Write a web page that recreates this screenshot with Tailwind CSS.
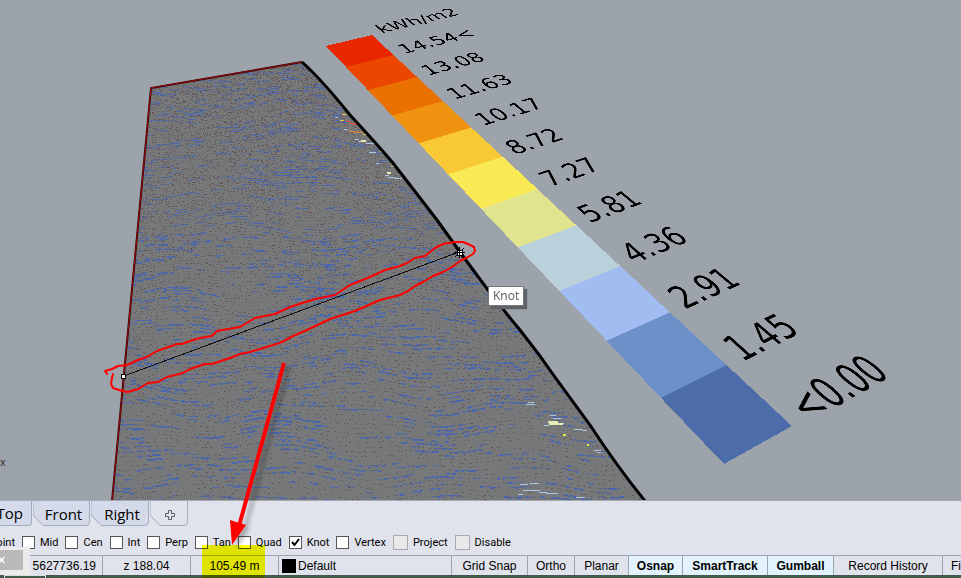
<!DOCTYPE html>
<html lang="en">
<head>
<meta charset="utf-8">
<title>Perspective viewport</title>
<script src="https://cdn.jsdelivr.net/npm/@tailwindcss/browser@4"></script>
</head>
<body class="relative flex h-screen flex-col overflow-hidden bg-[#e0e3eb] font-['Liberation_Sans',sans-serif] text-black">

<main class="relative min-h-0 flex-1 overflow-hidden border-b border-[#a3a8b3] bg-[#9da3ab]">
  <svg class="absolute left-0 top-0" width="961" height="578" viewBox="0 0 961 578" fill="none" aria-label="Radiation mesh">
    <defs>
      <clipPath id="mesh"><path d="M151 88L302 62L322 81L350 115L393 163L437 220L460 252L520 330L557 380L590 425L643 499L644 501H112Z"/></clipPath>
    </defs>
    <path d="M151 88L302 62L322 81L350 115L393 163L437 220L460 252L520 330L557 380L590 425L643 499L644 501H112Z" fill="#77787a"/>
    <g clip-path="url(#mesh)" shape-rendering="crispEdges">
      <path id="dots" stroke="#645658"/>
      <path id="haze" stroke="#5c6688"/>
      <path id="streaks" stroke="#4966b0"/>
      <g stroke-width="1">
        <path stroke="#f4c840" d="M342 114h4M348 113h3M340 120h4M363 134h5M391 166h3M380 151h4"/>
        <path stroke="#e8492c" d="M346 121h4M349 123h6M354 124h5"/>
        <path stroke="#e88a30" d="M349 131h6M354 132h9"/>
        <path stroke="#a9c8e8" d="M335 117h3M344 129h4M355 139h4M358 141h8M366 143h9M369 152h7M376 163h3M385 175h4M388 177h7M394 178h8M526 404h9M528 402h6M550 415h6M553 418h8M556 423h8M544 425h5M574 429h8M582 430h5M594 450h7M597 452h4M520 484h8M530 483h9M523 490h17M539 492h8M546 493h12M576 497h9M518 494h5"/>
        <path stroke="#e6ecb4" stroke-width="2" d="M548 422h10M549 424h14M387 173h4M361 141h5"/>
        <path stroke="#e6e04c" stroke-width="2" d="M563 435h3M587 445h2"/>
      </g>
    </g>
    <path d="M112 501L151 88L302 62" stroke="#2a0a0c" stroke-width="2"/>
    <path d="M112 501L151 88L302 62" stroke="#9a0508" stroke-width="1"/>
    <path d="M302 62Q322 80 350 115Q376 143 393 163L437 220L460 252Q490 294 520 330Q540 355 557 380L590 425Q616 465 645 501" stroke="#000" stroke-width="3"/>
    <path d="M124 376L459 252" stroke="#111" stroke-width="1" shape-rendering="crispEdges"/>
    <path d="M459 247v11M454 252h11M455 248l9 9M464 248l-9 9" stroke="#000" stroke-width="1" shape-rendering="crispEdges"/>
    <path d="M457 250h5v5h-5z" fill="#fff" stroke="#000" stroke-width="1" shape-rendering="crispEdges"/>
    <path d="M459 250v5M457 252h5" stroke="#000" stroke-width="1" shape-rendering="crispEdges"/>
    <rect x="121.500" y="374.500" width="4" height="4" fill="#fff" stroke="#000"/>
  </svg>

  <ol class="absolute left-0 top-0 w-[200px] origin-top-left text-[89px] leading-[84px] font-['DejaVu_Sans',sans-serif] [transform:matrix3d(0.273715,-0.050885,0,0.00011752,0.032323,0.110483,0,-0.00025823,0,0,1,0,326,46,0,1)]">
    <li class="relative h-[165px] bg-[#ea2600]"><span class="absolute -top-[69px] left-[240px] whitespace-nowrap">kWh/m2</span><span class="absolute -bottom-[20px] left-[240px] whitespace-nowrap">14.54&lt;</span></li>
    <li class="relative h-[165px] bg-[#ec4700]"><span class="absolute -bottom-[20px] left-[240px]">13.08</span></li>
    <li class="relative h-[165px] bg-[#ea7000]"><span class="absolute -bottom-[20px] left-[240px]">11.63</span></li>
    <li class="relative h-[165px] bg-[#ef9210]"><span class="absolute -bottom-[20px] left-[240px]">10.17</span></li>
    <li class="relative h-[165px] bg-[#f8c835]"><span class="absolute -bottom-[20px] left-[240px]">8.72</span></li>
    <li class="relative h-[165px] bg-[#f9ea55]"><span class="absolute -bottom-[20px] left-[240px]">7.27</span></li>
    <li class="relative h-[165px] bg-[#e0e48f]"><span class="absolute -bottom-[20px] left-[240px]">5.81</span></li>
    <li class="relative h-[165px] bg-[#bad0da]"><span class="absolute -bottom-[20px] left-[240px]">4.36</span></li>
    <li class="relative h-[165px] bg-[#a0bcf0]"><span class="absolute -bottom-[20px] left-[240px]">2.91</span></li>
    <li class="relative h-[165px] bg-[#6e90c8]"><span class="absolute -bottom-[20px] left-[240px]">1.45</span></li>
    <li class="relative h-[165px] bg-[#4c6caa]"><span class="absolute -bottom-[20px] left-[240px] whitespace-nowrap">&lt;0.00</span></li>
  </ol>

  <div role="tooltip" class="absolute left-[488px] top-[286px] border border-[#767676] bg-white px-1 text-[12px] leading-[18px] text-[#575757] shadow-[3px_3px_1px_#5f6368] font-['Open_Sans',sans-serif]">Knot</div>
  <span class="absolute left-0 top-[455px] text-[11px] leading-[14px] text-[#333]">x</span>
</main>

<nav class="flex h-[28px] shrink-0 items-start gap-px text-[15px] font-['Open_Sans',sans-serif]" aria-label="Viewports">
  <button class="h-[25px] w-[32px] rounded-br-[4px] border-r border-b border-[#a3abc0] bg-[#d4daea] leading-[24px]"><span class="flex justify-end pr-2">Top</span></button>
  <button class="relative h-[25px] w-[57px] pl-1 leading-[24px]"><svg class="absolute left-0 top-0" width="57" height="25" fill="#d4daea" stroke="#a3abc0"><path d="M0 -1V14L10 24.500H53Q56.500 24.500 56.500 21V-1"/></svg><span class="relative">Front</span></button>
  <button class="relative h-[25px] w-[58px] pl-1 leading-[24px]"><svg class="absolute left-0 top-0" width="58" height="25" fill="#d4daea" stroke="#a3abc0"><path d="M0 -1V14L10 24.500H54Q57.500 24.500 57.500 21V-1"/></svg><span class="relative">Right</span></button>
  <button class="relative h-[25px] w-[38px]" aria-label="New viewport"><svg width="38" height="25" fill="none" stroke="#a3abc0"><path d="M0 -1V14L10 24.500H34Q37.500 24.500 37.500 21V-1"/><path d="M18.500 9.500h3v3h3v3h-3v3h-3v-3h-3v-3h3z" stroke="#555a62"/></svg></button>
</nav>

<form class="flex h-[26px] shrink-0 items-center gap-[7px] overflow-hidden pt-px text-[11px] leading-[14px] font-['Roboto',sans-serif]">
  <span class="flex w-[15px] justify-end">Point</span>
  <label class="flex items-center gap-[5px]"><input type="checkbox" class="size-[13px] appearance-none border border-[#555] bg-white">Mid</label>
  <label class="flex items-center gap-[5px]"><input type="checkbox" class="size-[13px] appearance-none border border-[#555] bg-white">Cen</label>
  <label class="flex items-center gap-[5px]"><input type="checkbox" class="size-[13px] appearance-none border border-[#555] bg-white">Int</label>
  <label class="flex items-center gap-[5px]"><input type="checkbox" class="size-[13px] appearance-none border border-[#555] bg-white">Perp</label>
  <label class="flex items-center gap-[5px]"><input type="checkbox" class="size-[13px] appearance-none border border-[#555] bg-white">Tan</label>
  <label class="flex items-center gap-[5px]"><input type="checkbox" class="size-[13px] appearance-none border border-[#555] bg-white">Quad</label>
  <label class="relative flex items-center gap-[5px]"><input type="checkbox" checked class="size-[13px] appearance-none border border-[#555] bg-white"><svg class="pointer-events-none absolute left-0" width="13" height="13" fill="none" stroke="#000" stroke-width="2"><path d="M3 6L5.500 9L10 3"/></svg>Knot</label>
  <label class="flex items-center gap-[5px]"><input type="checkbox" class="size-[13px] appearance-none border border-[#555] bg-white">Vertex</label>
  <label class="flex items-center gap-[5px]"><input type="checkbox" class="size-[15px] appearance-none border border-[#aaa] bg-[#e9e9e9]">Project</label>
  <label class="flex items-center gap-[5px]"><input type="checkbox" class="size-[15px] appearance-none border border-[#aaa] bg-[#e9e9e9]">Disable</label>
</form>

<footer class="flex h-[20px] shrink-0 border-t border-[#9ba3b5] text-[12px] leading-[20px] whitespace-nowrap">
  <span class="flex w-[103px] shrink-0 justify-end overflow-hidden border-r border-[#9ba3b5] pr-1.5">y 5627736.19</span>
  <span class="w-[88px] shrink-0 border-r border-[#9ba3b5] text-center">z 188.04</span>
  <span class="w-[88px] shrink-0 border-r border-[#9ba3b5] text-center">105.49 m</span>
  <button class="flex w-[173px] shrink-0 items-center gap-0.5 border-r border-[#9ba3b5] pl-[3px]"><span class="size-[14px] bg-black"></span>Default</button>
  <button class="w-[76px] shrink-0 border-r border-[#9ba3b5]">Grid Snap</button>
  <button class="w-[47px] shrink-0 border-r border-[#9ba3b5]">Ortho</button>
  <button class="w-[54px] shrink-0 border-r border-[#9ba3b5]">Planar</button>
  <button class="w-[54px] shrink-0 border-r border-[#9ba3b5] bg-[#e3f3fd] font-bold">Osnap</button>
  <button class="w-[85px] shrink-0 border-r border-[#9ba3b5] bg-[#e3f3fd] font-bold">SmartTrack</button>
  <button class="w-[66px] shrink-0 border-r border-[#9ba3b5] bg-[#e3f3fd] font-bold">Gumball</button>
  <button class="w-[109px] shrink-0 border-r border-[#9ba3b5]">Record History</button>
  <button class="flex flex-1 overflow-hidden pl-2">Filter</button>
</footer>
<div class="flex h-[3px] shrink-0 overflow-hidden bg-[#44584f] pl-1"><span class="h-2 w-[42px] border border-[#d8dcdc]"></span></div>

<div class="absolute bottom-[3px] left-0 h-[28px] w-[30px] bg-[#ebebeb] pt-[3px]">
  <button class="flex h-[20px] w-[23px] items-center bg-[#bababa]" aria-label="Close"><svg width="8" height="8" fill="none" stroke="#fff" stroke-width="1.500"><path d="M-1 1L4.500 7M4.500 1L-1 7"/></svg></button>
</div>
<div class="absolute bottom-0 left-[202px] h-[33px] w-[63px] bg-[#ffff00] mix-blend-multiply"></div>

<svg class="pointer-events-none absolute left-0 top-0" width="961" height="578" fill="none" aria-hidden="true">
  <defs><filter id="soft" x="-50%" y="-10%" width="200%" height="120%"><feGaussianBlur stdDeviation="2"/></filter></defs>
  <g transform="translate(5 3)" opacity=".25" filter="url(#soft)"><path d="M284 363L240 526" stroke="#000" stroke-width="4"/><path d="M230 521L245 525L232 545Z" fill="#000"/></g>
  <path d="M284 363L239 526" stroke="#f00" stroke-width="4"/>
  <path d="M230 520L246 525L232 545Z" fill="#f00"/>
  <path stroke="#f00" stroke-width="2" stroke-linejoin="round" stroke-linecap="round" d="M107 374L105 371L112 369L118 366L127 365L138 360L147 357L157 351L177 344L182 344L190 341L200 338L212 336L217 331L222 330L240 327L255 318L275 314L290 307L315 299L335 295L350 285L370 277L385 270L400 266L407 263L415 258L425 256L435 248L443 244L455 242L463 242L468 244L474 247L475 251L473 254L468 257L460 261L452 267L443 272L433 276L425 281L415 286L408 291L400 295L380 300L355 311L330 319L307 330L293 336L282 342L270 346L250 352L240 354L230 358L212 364L205 364L190 369L183 373L167 377L158 382L148 383L138 389L128 392L122 391L113 388L111 384L112 378L113 374"/>
</svg>

<script>
  // Contour texture of the mesh: rows of dots and blue streaks that open out towards the viewer.
  let seed = 7;
  const rnd = () => (seed = (seed * 16807) % 2147483647) / 2147483647;
  const wave = (x, y) => 4 * Math.sin(x / 38 + y / 45) + 2.5 * Math.sin(x / 19 - y / 27) + (x - 350) * 0.02 * Math.sin(y / 60);
  let dots = '', haze = '', streaks = '';
  for (let y = 50; y < 512; y += 1.5 + (y - 50) / 150) {
    const near = (y - 50) / 450;
    for (let x = 100; x < 660; x += 2 + Math.floor(rnd() * (2 + near * 3))) {
      if (rnd() < 0.66 - near * 0.08) dots += `M${x} ${Math.round(y + wave(x, y) + rnd() * 1.5)}.5h${rnd() < 0.3 ? 2 : 1}`;
    }
    const phase = rnd() * 6;
    for (let x = 100; x < 660; x += 8 + rnd() * 14) {
      if (Math.sin(x / 27 + phase) + rnd() * 2 < 1.5 - near * 0.2) continue;
      const len = 4 + rnd() * (11 + near * 3);
      for (let i = 0; i < len; i += 2) {
        const py = Math.round(y + wave(x + i, y) + rnd() * 0.8);
        const seg = `M${Math.round(x + i)} ${py}.5h${1 + Math.round(rnd() * 2)}`;
        if (rnd() < 0.35) haze += seg; else streaks += seg;
        if (near > 0.4 && rnd() < 0.3) streaks += `M${Math.round(x + i)} ${py + 1}.5h3`;
      }
    }
  }
  document.getElementById('dots').setAttribute('d', dots);
  document.getElementById('haze').setAttribute('d', haze);
  document.getElementById('streaks').setAttribute('d', streaks);
</script>
</body>
</html>
